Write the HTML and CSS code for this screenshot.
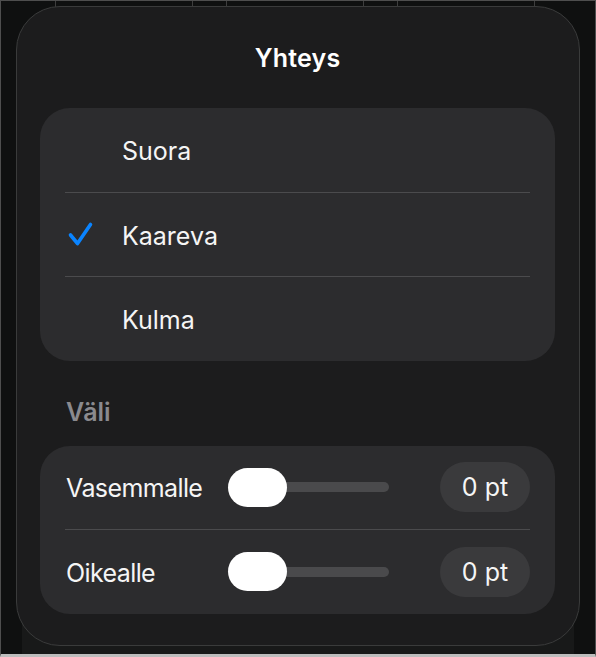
FILE: index.html
```html
<!DOCTYPE html>
<html lang="fi">
<head>
<meta charset="utf-8">
<title>Yhteys</title>
<link rel="stylesheet" href="styles.css">
</head>
<body>
<div class="frame">
  <div class="popover">
    <div class="title">Yhteys</div>

    <div class="card">
      <div class="opt-row">
        <span class="check-slot"></span>
        <span class="opt-label">Suora</span>
      </div>
      <div class="sep"></div>
      <div class="opt-row">
        <span class="check-slot">
          <svg class="check" viewBox="0 0 27 26" width="27" height="26" aria-hidden="true">
            <path d="M3.5 14 L10.5 22.5 L23.5 3.5" fill="none" stroke="#0a84ff" stroke-width="3.6" stroke-linecap="round" stroke-linejoin="round"/>
          </svg>
        </span>
        <span class="opt-label">Kaareva</span>
      </div>
      <div class="sep"></div>
      <div class="opt-row">
        <span class="check-slot"></span>
        <span class="opt-label">Kulma</span>
      </div>
    </div>

    <div class="section-head">Väli</div>

    <div class="card">
      <div class="ctl-row">
        <span class="ctl-label">Vasemmalle</span>
        <div class="slider"><span class="knob"></span><span class="track"></span></div>
        <span class="pill">0 pt</span>
      </div>
      <div class="sep"></div>
      <div class="ctl-row">
        <span class="ctl-label">Oikealle</span>
        <div class="slider"><span class="knob"></span><span class="track"></span></div>
        <span class="pill">0 pt</span>
      </div>
    </div>
  </div>
</div>
</body>
</html>
```

FILE: styles.css
```css
* { box-sizing: border-box; }

html, body {
  margin: 0;
  padding: 0;
  background: #0f1010;
}

body {
  width: 596px;
  height: 657px;
  font-family: Inter, "Liberation Sans", sans-serif;
  color: #ffffff;
}

.frame {
  width: 596px;
  height: 657px;
  border: 1px solid #4e4e4e;
  border-bottom: 3px solid #bdbdbd;
  padding: 5px 15px 0 15px;
  background-color: #0f1010;
  background-image:
    linear-gradient(#3e3e3e, #3e3e3e),
    linear-gradient(#3e3e3e, #3e3e3e),
    linear-gradient(#3e3e3e, #3e3e3e),
    linear-gradient(#3e3e3e, #3e3e3e),
    linear-gradient(#3e3e3e, #3e3e3e),
    linear-gradient(#3e3e3e, #3e3e3e),
    linear-gradient(#181919, #181919);
  background-repeat: no-repeat;
  background-size: 1px 6px, 1px 6px, 1px 6px, 1px 6px, 1px 6px, 1px 6px, 552px 90px;
  background-position: 54px 0, 191px 0, 225px 0, 362px 0, 396px 0, 533px 0, 21px 563px;
}

.popover {
  width: 564px;
  height: 640px;
  border: 1px solid #3a3b3b;
  border-radius: 44px;
  background: #1c1c1d;
  padding: 0 24px 0 23px;
  display: flex;
  flex-direction: column;
}

.title {
  height: 101px;
  flex: none;
  display: flex;
  align-items: center;
  justify-content: center;
  font-size: 25px;
  font-weight: 600;
  letter-spacing: 0.2px;
  color: #ffffff;
}

.card {
  background: #2c2c2e;
  border-radius: 30px;
  flex: none;
}

.sep {
  height: 1px;
  margin: 0 25px;
  background: #4b4b4d;
}

.opt-row {
  height: 83.5px;
  display: flex;
  align-items: center;
}

.check-slot {
  width: 82px;
  height: 26px;
  flex: none;
  padding-left: 27px;
  display: flex;
  align-items: center;
}

.check { display: block; }

.opt-label {
  font-size: 25px;
  font-weight: 400;
  color: #f5f5f5;
  padding-top: 3px;
}

.section-head {
  height: 85px;
  flex: none;
  display: flex;
  align-items: center;
  padding: 17px 0 0 26px;
  font-size: 25px;
  font-weight: 600;
  color: #8a8a8e;
}

.ctl-row {
  height: 83.5px;
  display: grid;
  grid-template-columns: 162px 161px 1fr;
  align-items: center;
  padding: 0 25px 0 26px;
}

.ctl-label {
  font-size: 25px;
  font-weight: 400;
  letter-spacing: -0.6px;
  color: #f5f5f5;
  padding-top: 2px;
}

.slider {
  display: flex;
  align-items: center;
  height: 39px;
}

.knob {
  width: 59px;
  height: 39px;
  border-radius: 20px;
  background: #ffffff;
  flex: none;
  position: relative;
  z-index: 1;
}

.track {
  flex: 1;
  height: 10px;
  margin-left: -30px;
  border-radius: 5px;
  background: #4a4a4c;
}

.pill {
  justify-self: end;
  width: 90px;
  height: 50px;
  border-radius: 25px;
  background: #3a3a3c;
  display: flex;
  align-items: center;
  justify-content: center;
  font-size: 25px;
  color: #f5f5f5;
}
```
